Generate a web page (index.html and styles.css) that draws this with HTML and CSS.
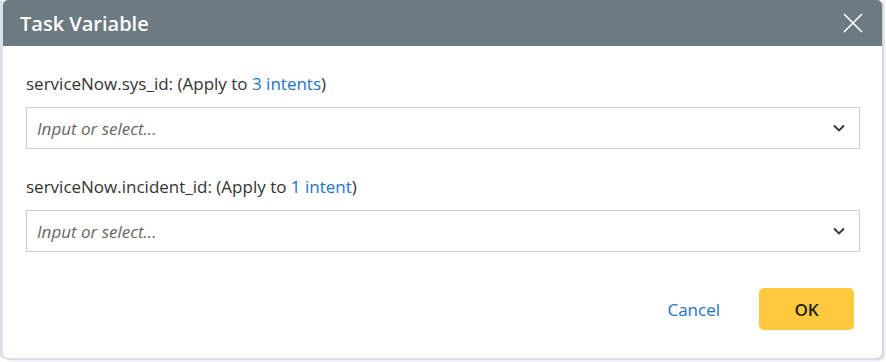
FILE: index.html
```html
<!DOCTYPE html>
<html>
<head>
<meta charset="utf-8">
<link rel="stylesheet" href="styles.css">
</head>
<body>
<div class="dialog">
  <div class="header">
    <span class="title">Task Variable</span>
    <svg class="close" width="20" height="20" viewBox="0 0 20 20"><path d="M1 1L19 19M19 1L1 19" stroke="#fff" stroke-width="1.6" fill="none"/></svg>
  </div>
  <div class="body">
    <div class="field">
      <div class="label">serviceNow.sys_id: (Apply to <a class="link">3 intents</a>)</div>
      <div class="select">
        <span class="placeholder">Input or select...</span>
        <svg class="chev" width="12" height="8" viewBox="0 0 12 8"><path d="M1 1.5L6 6.5L11 1.5" stroke="#333" stroke-width="1.8" fill="none"/></svg>
      </div>
    </div>
    <div class="field">
      <div class="label">serviceNow.incident_id: (Apply to <a class="link">1 intent</a>)</div>
      <div class="select">
        <span class="placeholder">Input or select...</span>
        <svg class="chev" width="12" height="8" viewBox="0 0 12 8"><path d="M1 1.5L6 6.5L11 1.5" stroke="#333" stroke-width="1.8" fill="none"/></svg>
      </div>
    </div>
  </div>
  <div class="footer">
    <a class="cancel">Cancel</a>
    <button class="ok">OK</button>
  </div>
</div>
</body>
</html>
```
FILE: styles.css
```css
html, body {
  margin: 0;
  padding: 0;
  background: #ffffff;
}
body {
  padding: 0 4px 4px 3px;
  font-family: "Open Sans", "Liberation Sans", sans-serif;
}
.dialog {
  width: 879px;
  height: 358px;
  background: #fff;
  border-radius: 0 0 5px 5px;
  box-shadow: -3px 1px 0 #dde1e9, 2px 2px 3px #c9ceda;
  display: flex;
  flex-direction: column;
  overflow: hidden;
}
.header {
  height: 46px;
  background: #6c7a82;
  border-radius: 5px 5px 0 0;
  display: flex;
  align-items: center;
  justify-content: space-between;
  padding: 0 19px 0 17px;
  flex-shrink: 0;
}
.title {
  color: #fff;
  font-size: 20px;
  font-weight: 600;
}
.close {
  display: block;
}
.body {
  padding: 27px 22px 0 23px;
  display: flex;
  flex-direction: column;
  gap: 27px;
}
.label {
  font-size: 17px;
  color: #333;
  line-height: 22px;
  margin-bottom: 12px;
}
.link {
  color: #2174c3;
  text-decoration: none;
}
.select {
  height: 40px;
  border: 1px solid #cfcfcf;
  display: flex;
  align-items: center;
  justify-content: space-between;
  padding: 0 14px 0 10px;
}
.placeholder {
  font-style: italic;
  color: #666;
  font-size: 17px;
}
.chev {
  display: block;
}
.footer {
  display: flex;
  justify-content: flex-end;
  align-items: center;
  padding: 36px 28px 0 0;
  gap: 39px;
}
.cancel {
  color: #2174c3;
  font-size: 17px;
}
.ok {
  width: 95px;
  height: 42px;
  background: #fdc93e;
  border: none;
  border-radius: 5px;
  font-family: "Open Sans", "Liberation Sans", sans-serif;
  font-size: 17px;
  font-weight: 600;
  color: #222;
}
```
